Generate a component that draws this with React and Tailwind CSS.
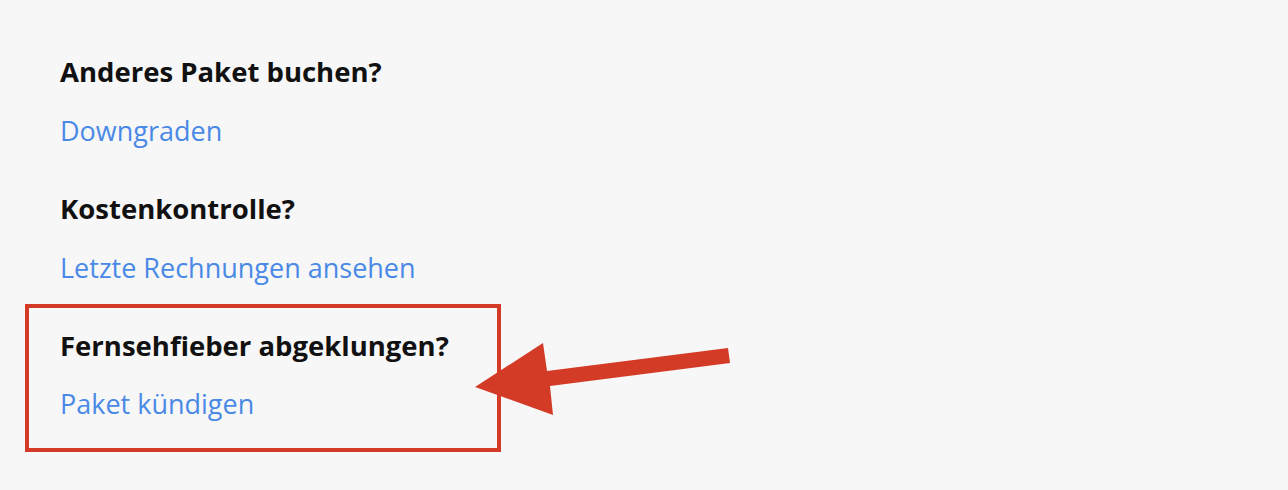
import React from "react";

const font = { fontFamily: '"Open Sans", "Noto Sans", sans-serif' };

function Arrow() {
  return (
    <svg
      className="absolute left-0 top-0 pointer-events-none"
      width="1288"
      height="490"
      viewBox="0 0 1288 490"
    >
      <polygon
        points="475,387 543,343 547,371 728,348 730,363 550,386 553,415"
        fill="#d43b26"
      />
    </svg>
  );
}

export default function App() {
  return (
    <div
      className="relative w-[1288px] h-[490px] bg-[#f7f7f7] overflow-hidden pt-[52px] pl-[60px]"
      style={font}
    >
      <div className="mb-[38px]">
        <h3 className="text-[27.5px] leading-[40px] font-bold text-[#111]">Anderes Paket buchen?</h3>
        <a className="block mt-[19px] text-[27px] leading-[40px] text-[#4a89e6]">Downgraden</a>
      </div>
      <div className="mb-[16px]">
        <h3 className="text-[27.5px] leading-[40px] font-bold text-[#111]">Kostenkontrolle?</h3>
        <a className="block mt-[19px] text-[27px] leading-[40px] text-[#4a89e6]">Letzte Rechnungen ansehen</a>
      </div>
      <div className="-ml-[35px] w-[476px] border-4 border-[#d43b26] pl-[31px] pt-[18px] pb-[24px]">
        <h3 className="text-[27.5px] leading-[40px] font-bold text-[#111]">Fernsehfieber abgeklungen?</h3>
        <a className="block mt-[18px] text-[27px] leading-[40px] text-[#4a89e6]">Paket kündigen</a>
      </div>
      <Arrow />
    </div>
  );
}
